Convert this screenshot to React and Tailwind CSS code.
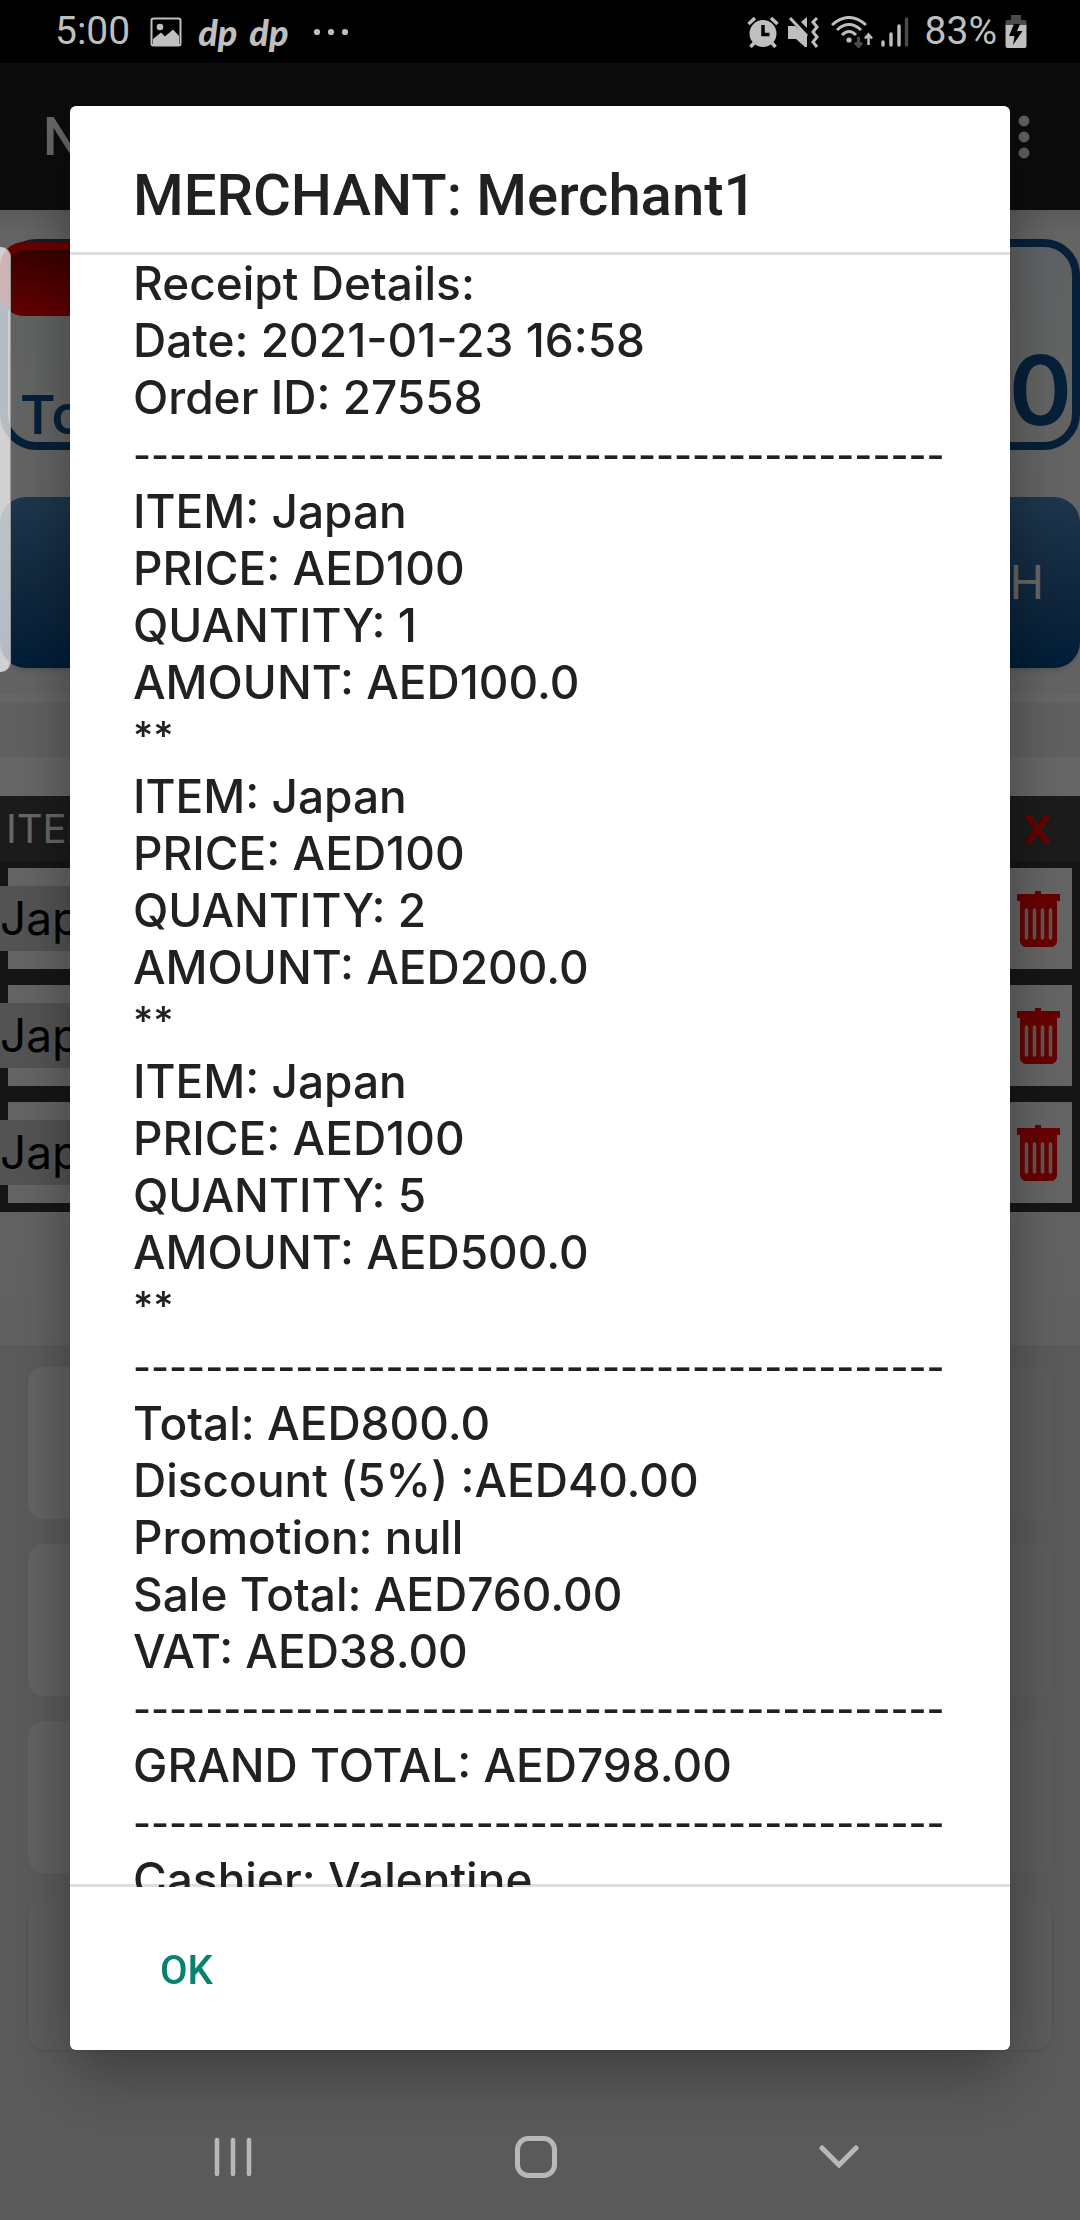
import React, { useState } from "react";

const RULE = "-".repeat(45);

const items = [
  { name: "Japan", price: "AED100", quantity: 1, amount: "AED100.0" },
  { name: "Japan", price: "AED100", quantity: 2, amount: "AED200.0" },
  { name: "Japan", price: "AED100", quantity: 5, amount: "AED500.0" },
];

const StatusBar = () => (
  <header className="relative z-20 flex h-[63px] items-center justify-between bg-black pl-[55px] pr-[53px] font-[Roboto,sans-serif] text-[39px] leading-none text-[#bfbfbf]">
    <div className="flex items-center gap-3">
      <span className="mr-2">5:00</span>
      <svg className="mr-1 h-[30px] w-8" viewBox="0 0 32 30" fill="currentColor">
        <rect x="1.5" y="1.5" width="29" height="27" rx="2" fill="none" stroke="currentColor" strokeWidth="2" />
        <circle cx="10" cy="10" r="3.3" />
        <path d="M3 22 11 15.500 15 19.500 23 12.500 29 19V28H3Z" />
      </svg>
      <span className="font-[Lato,sans-serif] text-[36px] font-black italic">dp</span>
      <span className="font-[Lato,sans-serif] text-[36px] font-black italic">dp</span>
      <svg className="ml-3 h-2 w-9" viewBox="0 0 36 8" fill="currentColor">
        <circle cx="4" cy="4" r="3.100" />
        <circle cx="18" cy="4" r="3.100" />
        <circle cx="32" cy="4" r="3.100" />
      </svg>
    </div>
    <div className="flex items-center gap-2">
      {/* alarm */}
      <svg className="h-8 w-8" viewBox="0 0 32 32">
        <circle cx="16" cy="17.500" r="13.500" fill="currentColor" />
        <path d="M1.500 8 8 2M30.500 8 24 2M7 27 3.500 31M25 27 28.500 31" stroke="currentColor" strokeWidth="3.500" />
        <path d="M16 9V18.500H22.500" fill="none" stroke="#000" strokeWidth="3.500" />
      </svg>
      {/* muted, vibrate */}
      <svg className="h-8 w-8" viewBox="0 0 32 32" fill="currentColor">
        <path d="M1 10H8L20 20V31H18L9 23H1Z" />
        <path d="M14 6 20 1V12Z" />
        <path d="M3 2 20 20" stroke="currentColor" strokeWidth="3" />
        <path d="M30 2 26 6 30 11 26 16 30 21 26 26 30 31" fill="none" stroke="currentColor" strokeWidth="3" />
      </svg>
      {/* wifi with traffic arrows */}
      <svg className="ml-1 h-8 w-[42px]" viewBox="0 0 42 32" fill="none" stroke="currentColor" strokeWidth="3">
        <path d="M1 9Q18-6 35 9" />
        <path d="M6 14Q18 3 30 14" />
        <path d="M11 19Q18 12 25 19" />
        <circle cx="18" cy="24" r="2.600" fill="currentColor" stroke="none" />
        <path d="M27.500 21V30M24 26.500 27.500 30.500 31 26.500" stroke="#4a4a4a" />
        <path d="M37.500 29V19M34 22.500 37.500 18.500 41 22.500" strokeWidth="2.500" />
      </svg>
      <svg className="h-8 w-7" viewBox="0 0 28 32" strokeWidth="3.400" strokeLinecap="round" stroke="currentColor">
        <path d="M2 26V29M10 18V29M18 10V29" />
        <path d="M25.500 3V29" stroke="#4a4a4a" />
      </svg>
      <span className="ml-2">83%</span>
      <svg className="h-[34px] w-[22px]" viewBox="0 0 22 34">
        <path d="M6 0H16V5H20Q21.500 5 21.500 7V11H0.500V7Q0.500 5 2 5H6Z" fill="#4a4a4a" />
        <path d="M0.500 10H21.500V31Q21.500 33 19.500 33H2.500Q0.500 33 0.500 31Z" fill="currentColor" />
        <path d="M9 9 4 21H9.500L8 30 17.500 16H12L15 9Z" fill="#000" />
      </svg>
    </div>
  </header>
);

const TrashIcon = () => (
  <svg className="h-14 w-[43px]" viewBox="0 0 43 56">
    <path d="M0 3H18V0H24V3H43V10H40V51Q39 55 35 56H8Q4 55 3 51V10H0Z" fill="#f00" />
    <path d="M9.500 19V47M17.500 19V47M25.500 19V47M33.500 19V47" stroke="#e8d8d8" strokeWidth="3.500" strokeLinecap="round" />
  </svg>
);

const SaleScreen = () => (
  <main className="flex flex-1 flex-col bg-[#e1e1e1] font-[Inter,sans-serif]">
    <div className="flex h-[147px] items-center justify-between bg-[#1f1f1f] pl-[43px] pr-[50px]">
      <h1 className="font-[Roboto,sans-serif] text-[54px] font-medium text-white">New</h1>
      <button type="button" aria-label="More options">
        <svg className="h-11 w-3" viewBox="0 0 12 44" fill="#eee">
          <circle cx="6" cy="6" r="5.400" />
          <circle cx="6" cy="22" r="5.400" />
          <circle cx="6" cy="38" r="5.400" />
        </svg>
      </button>
    </div>

    <div className="bg-linear-to-b from-[#e6e6e6] via-[#fafafa] via-5% to-[#f6f6f6] pb-[26px] pt-[29px]">
      <section className="flex h-[211px] flex-col rounded-[36px] border-8 border-[#0f5091] bg-linear-to-b from-[#eef4f6] to-[#f8f8f8]">
        <div className="-ml-2 -mt-[5px] h-[74px] w-1/2 rounded-l-[24px] border-l-8 border-t-8 border-[#f00] bg-linear-to-b from-[#900000] to-[#f60000]" />
        <div className="flex flex-1 items-end justify-between pl-3 font-semibold leading-none text-[#0f5091]">
          <span className="text-[54px]">Total</span>
          <span className="mb-1 text-[96px]">0</span>
        </div>
      </section>
      <button type="button" className="mt-[47px] flex h-[171px] w-full items-center justify-end rounded-[26px] bg-linear-to-b from-[#4a88c0] via-[#2b659c] to-[#00498a] pr-9 text-[46px] text-white shadow-md">
        CASH
      </button>
    </div>

    <div className="h-[63px] border-t-8 border-white bg-[#f0f0f0]" />
    <div className="bg-linear-to-b from-white to-[#f2f2f2] pb-[133px] pt-[39px]">
      <table className="w-full border-collapse bg-[#363636]">
        <thead>
          <tr className="h-[65px] bg-[#444] text-[40px] leading-none">
            <th scope="col" className="p-0 pl-1.5 text-left font-normal text-white">ITEM</th>
            <th scope="col" className="w-[110px] p-0 pl-6 text-center font-[Open_Sans,sans-serif] font-bold text-[#f00]">X</th>
          </tr>
        </thead>
        <tbody>
          {items.map((item, i) => (
            <tr key={i}>
              <td className="p-0 pb-[9px] pt-[7px]">
                <div className="ml-2 flex h-[101px] items-center bg-[#fafafa]">
                  <span className="-ml-2 flex h-[65px] w-60 items-center bg-[#cfcfcf] text-[46px] text-black">{item.name}</span>
                </div>
              </td>
              <td className="p-0 pb-[9px] pt-[7px]">
                <div className="mr-2 flex h-[101px] items-center justify-end bg-[#fafafa] pr-3">
                  <button type="button" aria-label={"Remove " + item.name}>
                    <TrashIcon />
                  </button>
                </div>
              </td>
            </tr>
          ))}
        </tbody>
      </table>
    </div>

    <div className="flex flex-col gap-[25px] px-7 pt-[22px]">
      <div className="h-[152px] rounded-2xl bg-linear-to-r from-[#f6f6f6] to-[#e6e6e6]" />
      <div className="h-[152px] rounded-2xl bg-linear-to-r from-[#f4f4f4] to-[#e6e6e6]" />
      <div className="h-[152px] rounded-2xl bg-linear-to-r from-[#f2f2f2] to-[#e6e6e6]" />
      <div className="h-[152px] rounded-2xl bg-[#e5e5e5] shadow-sm" />
    </div>
  </main>
);

const Rule = () => <p className="whitespace-nowrap text-[39px] leading-[57px]">{RULE}</p>;

const ReceiptDialog = ({ onClose }) => (
  <div className="fixed inset-0 z-10 flex flex-col bg-black/60 px-[70px] pb-[170px] pt-[106px]">
    <div
      role="dialog"
      aria-labelledby="receipt-title"
      className="flex min-h-0 flex-1 flex-col rounded-[6px] bg-white text-[#212121] shadow-[0_32px_64px_rgba(0,0,0,0.25),0_0_48px_rgba(0,0,0,0.15)]"
    >
      <h2 id="receipt-title" className="border-b-3 border-[#dfdfdf] px-[63px] pb-[23px] pt-[55px] font-[Roboto,sans-serif] text-[58px] font-medium leading-[68px]">
        MERCHANT: Merchant1
      </h2>
      <div className="min-h-0 flex-1 overflow-y-auto px-[63px] font-[Inter,sans-serif] text-[46px] font-medium leading-[57px] shadow-[inset_0_-3px_0_#dfdfdf] [scrollbar-width:none]">
        <p>Receipt Details:</p>
        <p>Date: 2021-01-23 16:58</p>
        <p>Order ID: 27558</p>
        <Rule />
        {items.map((item, i) => (
          <div key={i}>
            <p>ITEM: {item.name}</p>
            <p>PRICE: {item.price}</p>
            <p>QUANTITY: {item.quantity}</p>
            <p>AMOUNT: {item.amount}</p>
            <p className="pb-2 text-[39px] leading-[49px]">**</p>
          </div>
        ))}
        <Rule />
        <p>Total: AED800.0</p>
        <p>Discount (5%) :AED40.00</p>
        <p>Promotion: null</p>
        <p>Sale Total: AED760.00</p>
        <p>VAT: AED38.00</p>
        <Rule />
        <p>GRAND TOTAL: AED798.00</p>
        <Rule />
        <p>Cashier: Valentine</p>
      </div>
      <div className="flex h-[163px] items-center px-[63px] pt-1">
        <button type="button" onClick={onClose} className="h-[100px] px-[27px] font-[Roboto,sans-serif] text-[40px] font-medium text-[#08826f]">
          OK
        </button>
      </div>
    </div>
  </div>
);

const NavBar = () => (
  <nav className="fixed inset-x-0 bottom-0 z-20 grid h-[126px] grid-cols-3 items-center justify-items-center pl-[82px] pr-[90px] text-[#b8b8b8]">
    <button type="button" aria-label="Recent apps">
      <svg className="h-10 w-10" viewBox="0 0 40 40" stroke="currentColor" strokeWidth="4.500" strokeLinecap="round">
        <path d="M4 3V37M20 3V37M36 3V37" />
      </svg>
    </button>
    <button type="button" aria-label="Home">
      <svg className="h-[42px] w-[42px]" viewBox="0 0 42 42" fill="none" stroke="currentColor" strokeWidth="5">
        <rect x="2.500" y="2.500" width="37" height="37" rx="11" />
      </svg>
    </button>
    <button type="button" aria-label="Back">
      <svg className="h-6 w-10" viewBox="0 0 40 24" fill="none" stroke="currentColor" strokeWidth="5" strokeLinecap="round">
        <path d="M3 3 20 20 37 3" />
      </svg>
    </button>
  </nav>
);

export default function App() {
  const [open, setOpen] = useState(true);

  return (
    <div className="flex min-h-screen flex-col">
      <StatusBar />
      <SaleScreen />
      {open && <ReceiptDialog onClose={() => setOpen(false)} />}
      <div className="fixed left-0 top-[247px] z-20 h-[425px] w-[11px] rounded-r-[10px] border-r border-[#999] bg-white/70" />
      <NavBar />
    </div>
  );
}
